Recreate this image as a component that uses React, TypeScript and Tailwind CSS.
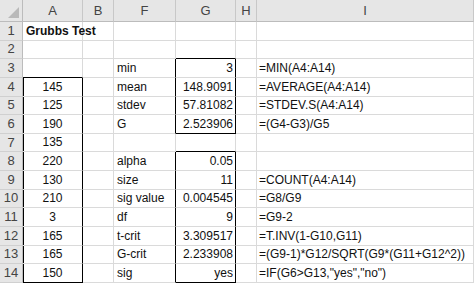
type Row = { a?: string; f?: string; g?: string; i?: string };

const rows: Row[] = [
  {},
  {},
  { f: "min", g: "3", i: "=MIN(A4:A14)" },
  { a: "145", f: "mean", g: "148.9091", i: "=AVERAGE(A4:A14)" },
  { a: "125", f: "stdev", g: "57.81082", i: "=STDEV.S(A4:A14)" },
  { a: "190", f: "G", g: "2.523906", i: "=(G4-G3)/G5" },
  { a: "135" },
  { a: "220", f: "alpha", g: "0.05" },
  { a: "130", f: "size", g: "11", i: "=COUNT(A4:A14)" },
  { a: "210", f: "sig value", g: "0.004545", i: "=G8/G9" },
  { a: "3", f: "df", g: "9", i: "=G9-2" },
  { a: "165", f: "t-crit", g: "3.309517", i: "=T.INV(1-G10,G11)" },
  { a: "165", f: "G-crit", g: "2.233908", i: "=(G9-1)*G12/SQRT(G9*(G11+G12^2))" },
  { a: "150", f: "sig", g: "yes", i: '=IF(G6>G13,"yes","no")' },
];

const cols = ["A", "B", "F", "G", "H", "I"];

// rows that sit inside the boxed ranges
const inA = (r: number) => r >= 4 && r <= 14;
const inG = (r: number) => (r >= 3 && r <= 6) || (r >= 8 && r <= 14);

const cell = "flex items-end pb-[1px] border-r border-b border-[#dadada] overflow-visible whitespace-nowrap";

export default function App() {
  return (
    <div className="w-[474px] h-[286px] overflow-hidden bg-white text-[12px] leading-[16px] text-[#111] font-['Liberation_Sans',Arial,sans-serif]">
      <div className="grid grid-cols-[23px_60px_31px_62px_60px_21px_1fr] grid-rows-[22px_repeat(14,18.64px)]">
        {/* corner + column letters */}
        <div className="relative bg-[#e6e6e6] border-r border-b border-[#bcbcbc]">
          <div className="absolute right-[3px] bottom-[3px] w-0 h-0 border-l-[11px] border-l-transparent border-b-[11px] border-b-[#b9b9b9]" />
        </div>
        {cols.map((c) => (
          <div
            key={c}
            className="flex items-center justify-center bg-[#e6e6e6] border-r border-b border-r-[#c8c8c8] border-b-[#bcbcbc] text-[13px] text-[#444]"
          >
            {c}
          </div>
        ))}

        {rows.map((row, idx) => {
          const r = idx + 1;
          return [
            <div
              key={`h${r}`}
              className="flex items-center justify-center bg-[#e6e6e6] border-r border-b border-r-[#bcbcbc] border-b-[#d0d0d0] text-[13px] text-[#444]"
            >
              {r}
            </div>,
            // A
            <div
              key={`a${r}`}
              className={`${cell} justify-center ${inA(r) ? "border-r-black shadow-[inset_1px_0_0_#000]" : ""} ${r === 3 || r === 14 ? "border-b-black" : ""} ${r === 1 ? "justify-start pl-[3px] font-bold" : ""}`}
            >
              {r === 1 ? "Grubbs Test" : row.a}
            </div>,
            // B
            <div key={`b${r}`} className={cell} />,
            // F
            <div
              key={`f${r}`}
              className={`${cell} pl-[3px] ${inG(r) ? "border-r-black" : ""}`}
            >
              {row.f}
            </div>,
            // G
            <div
              key={`g${r}`}
              className={`${cell} justify-end pr-[2px] ${inG(r) ? "border-r-black" : ""} ${r === 2 || r === 6 || r === 7 || r === 14 ? "border-b-black" : ""}`}
            >
              {row.g}
            </div>,
            // H
            <div key={`hh${r}`} className={cell} />,
            // I
            <div key={`i${r}`} className={`${cell} pl-[2px]`}>
              {row.i}
            </div>,
          ];
        })}
      </div>
    </div>
  );
}
